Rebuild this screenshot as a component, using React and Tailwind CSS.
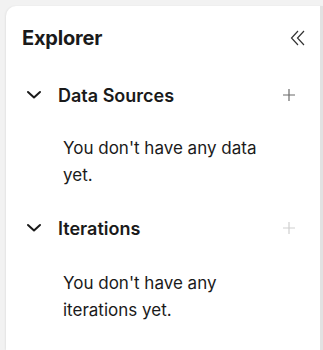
import React from 'react';

const Chevron = () => (
  <svg width="16" height="16" viewBox="0 0 16 16" fill="none" stroke="#1a1a1a" strokeWidth="2" strokeLinecap="round" strokeLinejoin="round">
    <path d="M2 5l6 5.5L14 5" />
  </svg>
);

const Plus = ({ color }) => (
  <svg width="14" height="14" viewBox="0 0 14 14" fill="none" stroke={color} strokeWidth="1.2">
    <path d="M7 1v12M1 7h12" />
  </svg>
);

const Collapse = () => (
  <svg width="16" height="18" viewBox="0 0 16 18" fill="none" stroke="#333" strokeWidth="1.2">
    <path d="M8 2L1.5 9 8 16" />
    <path d="M14 2L7.5 9 14 16" />
  </svg>
);

const sections = [
  { id: 1, title: 'Data Sources', empty: "You don't have any data yet.", plus: '#6b6b6b' },
  { id: 2, title: 'Iterations', empty: "You don't have any iterations yet.", plus: '#cfcfcf' },
];

export default function App() {
  return (
    <div className="h-[350px] bg-[#f2f2f2] pt-[6px] pl-[6px] overflow-hidden" style={{ fontFamily: 'Inter, "Noto Sans", sans-serif' }}>
      <div className="h-[344px] bg-white rounded-tl-[10px] border-r-[3px] border-[#e2e2e2] shadow-[-1px_0_2px_rgba(0,0,0,0.06)] text-[#1a1a1a]">
        {/* Header */}
        <div className="flex items-center justify-between pl-[16px] pr-[14px] pt-[18px]">
          <h1 className="text-[20px] leading-[28px] font-bold tracking-[-0.2px]">Explorer</h1>
          <Collapse />
        </div>

        {sections.map((s, i) => (
          <div key={s.id} className={i === 0 ? 'mt-[31px]' : 'mt-[27px]'}>
            <div className="flex items-center justify-between pl-[20px] pr-[24px] h-[24px]">
              <div className="flex items-center gap-[16px]">
                <Chevron />
                <span className="text-[18px] font-semibold">{s.title}</span>
              </div>
              <Plus color={s.plus} />
            </div>
            <p className={`${i === 0 ? 'mt-[28px]' : 'mt-[30px]'} pl-[57px] pr-[40px] text-[17px] leading-[27px]`}>{s.empty}</p>
          </div>
        ))}
      </div>
    </div>
  );
}
